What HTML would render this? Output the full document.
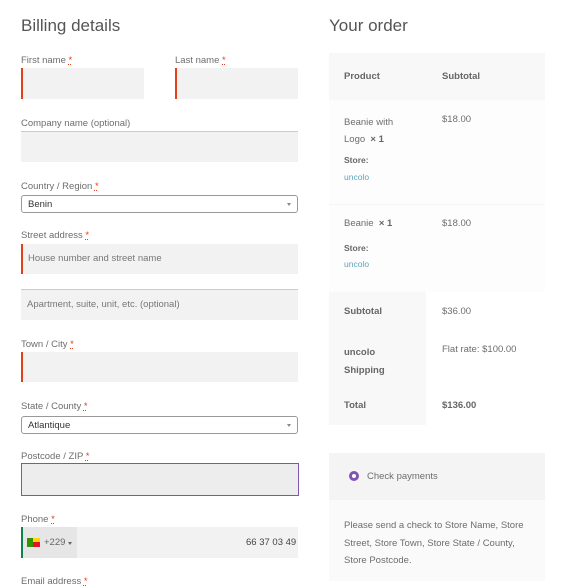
<!DOCTYPE html>
<html><head><style>
*{margin:0;padding:0;box-sizing:border-box}
body{width:562px;height:581px;overflow:hidden;background:#fff;font-family:"Liberation Sans",sans-serif;color:#6d6d6d;font-size:9.5px;position:relative}
.a{position:absolute;white-space:nowrap}
h2{position:absolute;font-weight:300;font-size:17px;color:#555}
.lbl{position:absolute;font-size:9.5px;color:#6d6d6d;margin-top:2px}
.req{color:#e2401c;text-decoration:underline dotted}
.in{position:absolute;background:#f2f2f2}
.red{border-left:2px solid #e2401c}
.top{border-top:1px solid #ccc}
.sel{position:absolute;border:1px solid #999;border-radius:3px;background:#fff;color:#333;padding-left:6px;line-height:17px;font-size:9.5px}
.sel:after{content:"";position:absolute;right:6px;top:7px;border:2.5px solid transparent;border-top:3px solid #888}
.b{font-weight:bold;color:#666}
.lnk{color:#5ba4b8}
</style></head><body>
<h2 style="left:21px;top:16px">Billing details</h2>
<div class="lbl" style="left:21px;top:53px">First name <span class="req">*</span></div>
<div class="lbl" style="left:175px;top:53px">Last name <span class="req">*</span></div>
<div class="in red" style="left:21px;top:68px;width:123px;height:31px"></div>
<div class="in red" style="left:175px;top:68px;width:123px;height:31px"></div>
<div class="lbl" style="left:21px;top:116px">Company name (optional)</div>
<div class="in top" style="left:21px;top:131px;width:277px;height:31px"></div>
<div class="lbl" style="left:21px;top:179px">Country / Region <span class="req">*</span></div>
<div class="sel" style="left:21px;top:195px;width:277px;height:18px">Benin</div>
<div class="lbl" style="left:21px;top:228px">Street address <span class="req">*</span></div>
<div class="in red" style="left:21px;top:244px;width:277px;height:30px;padding:9px 5px;color:#777">House number and street name</div>
<div class="in top" style="left:21px;top:289px;width:277px;height:31px;padding:9px 6px;color:#777">Apartment, suite, unit, etc. (optional)</div>
<div class="lbl" style="left:21px;top:337px">Town / City <span class="req">*</span></div>
<div class="in red" style="left:21px;top:352px;width:277px;height:30px"></div>
<div class="lbl" style="left:21px;top:399px">State / County <span class="req">*</span></div>
<div class="sel" style="left:21px;top:416px;width:277px;height:18px">Atlantique</div>
<div class="lbl" style="left:21px;top:449px">Postcode / ZIP <span class="req">*</span></div>
<div class="in" style="left:21px;top:463px;width:278px;height:33px;background:#ededed;border:1px solid #7f54b3"></div>
<div class="lbl" style="left:21px;top:512px">Phone <span class="req">*</span></div>
<div class="in" style="left:21px;top:527px;width:277px;height:31px;border-left:2px solid #0f834d"></div>
<div class="a" style="left:23px;top:527px;width:54px;height:31px;background:#e6e6e6"></div>
<div class="a" style="left:27px;top:538px;width:6px;height:9px;background:#319400"></div>
<div class="a" style="left:33px;top:538px;width:7px;height:4px;background:#ffd600"></div>
<div class="a" style="left:33px;top:542px;width:7px;height:5px;background:#e8112d"></div>
<div class="a" style="left:44px;top:537px;color:#666">+229</div>
<div class="a" style="left:68px;top:542px;border:2.5px solid transparent;border-top:3px solid #666"></div>
<div class="a" style="left:246px;top:537px;color:#444">66 37 03 49</div>
<div class="lbl" style="left:21px;top:574px">Email address <span class="req">*</span></div>

<h2 style="left:329px;top:16px">Your order</h2>
<div class="a" style="left:329px;top:53px;width:216px;height:47px;background:#f8f8f8"></div>
<div class="a b" style="left:344px;top:71px">Product</div>
<div class="a b" style="left:442px;top:71px">Subtotal</div>
<div class="a" style="left:329px;top:100px;width:216px;height:192px;background:#fdfdfd"></div>
<div class="a" style="left:329px;top:204px;width:216px;height:1px;background:#f5f5f5"></div>
<div class="a" style="left:344px;top:114px;line-height:17px">Beanie with<br>Logo &nbsp;<span class="b">× 1</span></div>
<div class="a" style="left:442px;top:114px">$18.00</div>
<div class="a b" style="left:344px;top:155px;font-size:8.5px">Store:</div>
<div class="a lnk" style="left:344px;top:172px;font-size:8.5px">uncolo</div>
<div class="a" style="left:344px;top:218px">Beanie &nbsp;<span class="b">× 1</span></div>
<div class="a" style="left:442px;top:218px">$18.00</div>
<div class="a b" style="left:344px;top:243px;font-size:8.5px">Store:</div>
<div class="a lnk" style="left:344px;top:259px;font-size:8.5px">uncolo</div>
<div class="a" style="left:329px;top:292px;width:97px;height:133px;background:#f8f8f8"></div>
<div class="a b" style="left:344px;top:306px">Subtotal</div>
<div class="a" style="left:442px;top:306px">$36.00</div>
<div class="a b" style="left:344px;top:344px;line-height:18px">uncolo<br>Shipping</div>
<div class="a" style="left:442px;top:344px">Flat rate: $100.00</div>
<div class="a b" style="left:344px;top:400px">Total</div>
<div class="a b" style="left:442px;top:400px">$136.00</div>
<div class="a" style="left:329px;top:453px;width:216px;height:47px;background:#f4f4f4"></div>
<div class="a" style="left:349px;top:471px;width:10px;height:10px;border-radius:50%;border:3px solid #7f54b3;background:#fff"></div>
<div class="a" style="left:367px;top:471px">Check payments</div>
<div class="a" style="left:329px;top:500px;width:216px;height:81px;background:#fafafa"></div>
<div class="a" style="left:344px;top:517px;line-height:17.5px">Please send a check to Store Name, Store<br>Street, Store Town, Store State / County,<br>Store Postcode.</div>
</body></html>
